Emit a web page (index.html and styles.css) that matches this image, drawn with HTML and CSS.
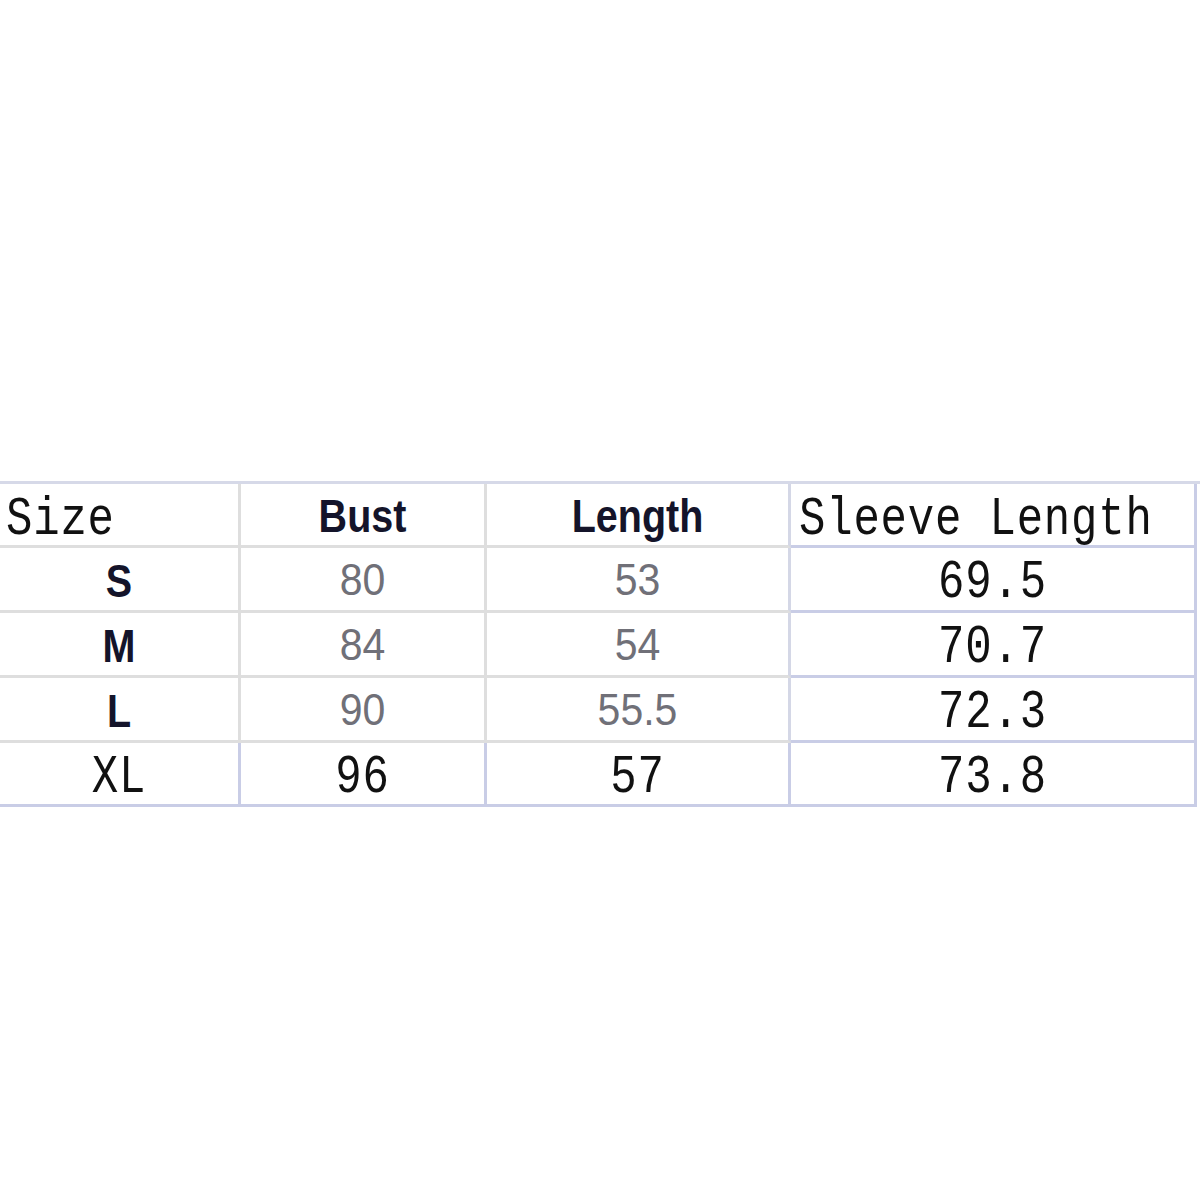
FILE: index.html
```html
<!DOCTYPE html>
<html>
<head>
<meta charset="utf-8">
<link rel="stylesheet" href="styles.css">
</head>
<body>
<div class="page">
  <div class="chart">
    <div class="cell c1 head left"><span class="mono">Size</span></div>
    <div class="cell c2 head center"><span class="bold">Bust</span></div>
    <div class="cell c3 head center"><span class="bold">Length</span></div>
    <div class="cell c4 head blue-side left"><span class="mono">Sleeve Length</span></div>

    <div class="cell c1 center"><span class="bold">S</span></div>
    <div class="cell c2 center"><span class="num">80</span></div>
    <div class="cell c3 center"><span class="num">53</span></div>
    <div class="cell c4 blue-side center"><span class="mono">69.5</span></div>

    <div class="cell c1 center"><span class="bold">M</span></div>
    <div class="cell c2 center"><span class="num">84</span></div>
    <div class="cell c3 center"><span class="num">54</span></div>
    <div class="cell c4 blue-side center"><span class="mono">70.7</span></div>

    <div class="cell c1 center"><span class="bold">L</span></div>
    <div class="cell c2 center"><span class="num">90</span></div>
    <div class="cell c3 center"><span class="num">55.5</span></div>
    <div class="cell c4 blue-side center"><span class="mono">72.3</span></div>

    <div class="cell c1 center last"><span class="mono">XL</span></div>
    <div class="cell c2 center last"><span class="mono">96</span></div>
    <div class="cell c3 center last"><span class="mono">57</span></div>
    <div class="cell c4 blue-side center last"><span class="mono">73.8</span></div>
  </div>
</div>
</body>
</html>
```

FILE: styles.css
```css
html, body {
  margin: 0;
  padding: 0;
  background: #ffffff;
}

.page {
  width: 1200px;
  height: 1200px;
  padding-top: 481px;
  box-sizing: border-box;
}

.chart {
  display: grid;
  grid-template-columns: 241px 246px 304px 406px;
  grid-template-rows: 64px 65px 65px 65px 64px;
  border-top: 3px solid #d6d9e8;
}

.cell {
  display: flex;
  align-items: center;
  border-right: 3px solid #dedede;
  border-bottom: 3px solid #dedede;
  box-sizing: border-box;
  overflow: hidden;
}

.center {
  justify-content: center;
}

.left {
  justify-content: flex-start;
}

.c1.left {
  padding-left: 6px;
}

.c4.left {
  padding-left: 8px;
}

.blue-side {
  border-right-color: #c9cde6;
  border-bottom-color: #c9cde6;
}

.c3 {
  border-right-color: #d4d7e6;
}

.last {
  border-bottom-color: #c9cde6;
}

.c1.last,
.c2.last,
.c3.last {
  border-right-color: #c9cde6;
}

.mono {
  font-family: "Liberation Mono", "DejaVu Sans Mono", monospace;
  font-size: 44px;
  color: #111111;
  display: inline-block;
  transform: scaleY(1.2);
  letter-spacing: 0.8px;
  padding-top: 6px;
}

.head .mono {
  padding-top: 8px;
}

.bold {
  font-family: "Liberation Sans", Arial, sans-serif;
  font-weight: bold;
  font-size: 39.5px;
  color: #14142a;
  display: inline-block;
  transform: scaleY(1.18);
  padding-top: 2px;
}

.num {
  font-family: "Liberation Sans", Arial, sans-serif;
  font-size: 41px;
  color: #707078;
  display: inline-block;
  transform: scaleY(1.1);
  padding-top: 2px;
}
```
